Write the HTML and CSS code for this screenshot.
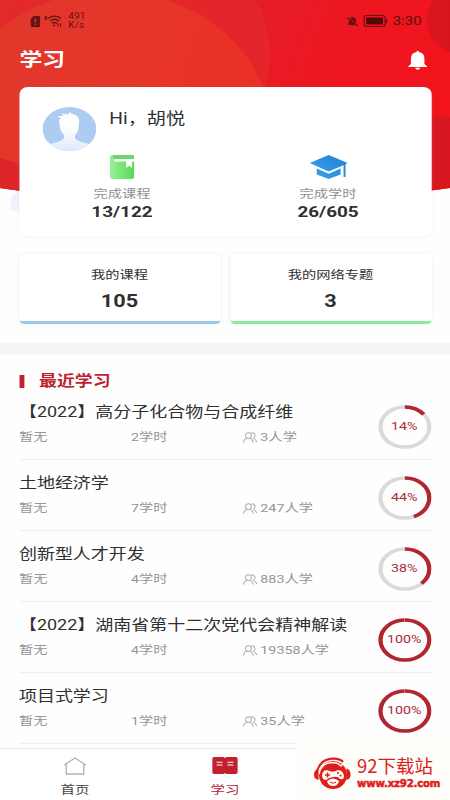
FILE: index.html
```html
<!DOCTYPE html>
<html lang="zh-CN">
<head>
<meta charset="utf-8">
<title>学习</title>
<link rel="stylesheet" href="styles.css">
</head>
<body>
<div class="screen">
  <svg class="backdrop" viewBox="0 0 450 240" preserveAspectRatio="none" aria-hidden="true">
    <defs>
      <linearGradient id="red" x1="0" x2="1" y1="0" y2="0.2"><stop offset="0" stop-color="#e32b2a"/><stop offset=".55" stop-color="#e51d26"/><stop offset=".8" stop-color="#ee1620"/><stop offset="1" stop-color="#f1141c"/></linearGradient>
      <linearGradient id="orange" x1="0" x2="1" y1="0" y2=".3"><stop offset="0" stop-color="#df3a2d"/><stop offset="1" stop-color="#eb3026"/></linearGradient>
      <clipPath id="dome"><path d="M0 0H450V188Q225 222 0 188Z"/></clipPath>
    </defs>
    <path d="M12 196L19 191V212L10 209Z" fill="#f1f1fb"/>
    <g clip-path="url(#dome)">
      <rect width="450" height="240" fill="url(#red)"/>
      <ellipse cx="163" cy="55" rx="107" ry="110" fill="#e42529"/>
      <ellipse cx="110" cy="134" rx="162" ry="143" fill="url(#orange)"/>
      <path d="M0 158Q60 172 120 230H0Z" fill="#dd2529"/>
      <path d="M425 120Q438 116 450 117V240H425Z" fill="#d91720"/>
      <ellipse cx="461" cy="20" rx="34" ry="34" fill="#d9151d"/>
    </g>
  </svg>

  <div class="status">
    <svg class="sim" viewBox="0 0 9 11" preserveAspectRatio="none"><path d="M3 0H8Q9 0 9 1V10Q9 11 8 11H1Q0 11 0 10V3Z" fill="#641414"/><path d="M4.500 2.500V6.500M4.500 7.700V9" stroke="#e23a2c" stroke-width="1.300"/></svg>
    <svg class="wifi" viewBox="0 0 18 12" preserveAspectRatio="none"><g fill="none" stroke="#641414" stroke-width="1.400"><path d="M4 3.500Q10.500-1.200 17 3.500M6 6Q10.500 2.600 15 6M8 8.300Q10.500 6.600 13 8.300"/><path d="M2.800 1Q.9 2 1 3.700A1 1 0 1 0 1.300 2.700" stroke-width="1"/><path d="M14 8.500V11.500M16.500 8.500V11.500" stroke-width="1.100"/></g><circle cx="10" cy="10.500" r="1.100" fill="#641414"/></svg>
    <div class="speed">491<br>K/s</div>
    <svg class="mute" viewBox="0 0 11 12" preserveAspectRatio="none"><path d="M1.200 9.500V8.700L2.300 7.500V4.800Q2.300 2 5 1.400Q5.500.4 6 1.400Q8.700 2 8.700 4.800V7.500L9.800 8.700V9.500ZM4.200 10.200H6.800Q6 11.700 4.200 10.200Z" fill="#64100f"/><path d="M.8 1.200L10.500 9.800" stroke="#e91e24" stroke-width="1"/><path d="M.5 2L10.300 10.700" stroke="#64100f" stroke-width="1.100"/></svg>
    <svg class="battery" viewBox="0 0 20 12" preserveAspectRatio="none"><rect x=".5" y=".5" width="17.300" height="11" rx="2.400" fill="none" stroke="#64100f"/><rect x="2.300" y="2.500" width="13.700" height="7" rx=".8" fill="#4e0b0c"/><path d="M19.200 4V8" stroke="#64100f" stroke-width="1.200"/></svg>
    <span class="clock">3:30</span>
  </div>

  <header class="top">
    <h1>学习</h1>
    <svg class="bell" viewBox="0 0 20 20" preserveAspectRatio="none"><path d="M9 2.100Q9 .5 10 .5T11 2.100Q16.500 3 16.500 8.500V14L19 16.200V17H1V16.200L3.500 14V8.500Q3.500 3 9 2.100ZM7.500 17.700H12.500Q12 19.700 10 19.700T7.500 17.700Z" fill="#fff"/></svg>
  </header>

  <section class="profile">
    <div class="person">
      <svg class="avatar" viewBox="0 0 44 44">
        <defs><linearGradient id="body" x1="0" x2="0" y1="0" y2="1"><stop offset=".35" stop-color="#fff"/><stop offset="1" stop-color="#dce9fb"/></linearGradient><clipPath id="face"><circle cx="22" cy="22" r="22"/></clipPath></defs>
        <g clip-path="url(#face)"><rect width="44" height="44" fill="#aecbf1"/><path d="M14 19L13.500 13L15 11.500L12 9L17 9L15.500 6.500L21 7.500L22 5L24 7Q30 8 30 14L29.500 20Q29 26 26.500 28V31Q27 34 38 37V45H6V37Q17 34 17.500 31V28Q14.500 25 14 19Z" fill="url(#body)"/></g>
      </svg>
      <span class="name">Hi，胡悦</span>
    </div>
    <div class="stats">
      <div class="stat">
        <svg class="book" viewBox="0 0 24 24" preserveAspectRatio="none"><defs><linearGradient id="green"><stop stop-color="#9cf09a"/><stop offset="1" stop-color="#56d951"/></linearGradient></defs><path d="M3 0H24V22Q24 24 22 24H3Q0 24 0 21V3Q0 0 3 0Z" fill="url(#green)"/><path d="M3 0H24V4H5Q3 4 3 2.500" fill="#6ed66c"/><path d="M4.500 4H24V6.500H22V13L19 10.800L16 13V6.500H4.500Z" fill="#fff"/></svg>
        <span>完成课程</span><b>13/122</b>
      </div>
      <div class="stat">
        <svg class="cap" viewBox="0 0 38 24" preserveAspectRatio="none"><defs><linearGradient id="blue" x1="0" x2="1" y1="1" y2="0"><stop stop-color="#3ba3ee"/><stop offset="1" stop-color="#1f80d5"/></linearGradient></defs><path d="M19 0L38 8L36 9.200V22H34V10.200L19 16.500L0 8ZM7 13.500L19 18.800L31 13.500V19.500L19 24L7 19.500Z" fill="url(#blue)"/></svg>
        <span>完成学时</span><b>26/605</b>
      </div>
    </div>
  </section>

  <section class="tiles">
    <div class="tile tile-blue"><span>我的课程</span><b>105</b></div>
    <div class="tile tile-green"><span>我的网络专题</span><b>3</b></div>
  </section>
  <div class="band"></div>

  <main class="recent">
    <h2>最近学习</h2>
    <div id="courses"></div>
  </main>

  <nav class="tabs">
    <div class="tab"><svg viewBox="0 0 22 18" preserveAspectRatio="none"><path d="M.7 8L11 1L21.300 8M2.700 7V17H19.300V7" fill="none" stroke="#b3b3b3" stroke-width="1.300"/></svg><span>首页</span></div>
    <div class="tab active"><svg viewBox="0 0 26 18" preserveAspectRatio="none"><path d="M2 0H11.500L13 1L14.500 0H24Q26 0 26 2V16Q26 18 24 18H14.500L13 17L11.500 18H2Q0 18 0 16V2Q0 0 2 0Z" fill="#c3202f"/><path d="M4.500 5.500H10.500M4.500 8.500H10.500M15.500 5.500H21.500M15.500 8.500H21.500" stroke="#fff" stroke-width="1.100"/></svg><span>学习</span></div>
    <div class="tab"></div>
  </nav>
</div>

<aside class="mark">
  <svg viewBox="0 0 38 34"><circle cx="20" cy="18" r="14" fill="#e01e19"/><path d="M4.500 13Q8 2 20 1.700Q27 1.500 30 5" fill="none" stroke="#e01e19" stroke-width="2.200"/><path d="M6 17Q8 6 19 5.500Q25 5.500 28 9L33 4" fill="none" stroke="#fffdf9" stroke-width="1.500"/><path d="M5.500 11.500V23Q1 22 1 17.500T5.500 11.500ZM33.500 11.500V23Q38 22 37.500 17T33.500 11.500Z" fill="#e01e19"/><path d="M9 18Q10 12 15 13.500Q20 16 25 13Q30 13 31 19Q31 23 27 22Q25 19 20 20Q15 21 13 23Q9 23 9 18Z" fill="#fffdf9"/><path d="M12 18H17M14.500 15.500V20.500" stroke="#e01e19" stroke-width="1.400"/><circle cx="25" cy="16" r="1.100" fill="#e01e19"/><circle cx="27.500" cy="18.500" r="1.100" fill="#e01e19"/><path d="M14 24Q20 19 26 24Q25 29 20 29T14 24Z" fill="#fffdf9"/><path d="M17 25Q20 27.500 23 25" fill="none" stroke="#e01e19"/></svg>
  <div class="mark-text"><span>92下载站</span><b>www.xz92.com</b></div>
</aside>
<script src="app.js"></script>
</body>
</html>
```
FILE: styles.css
```css
* { box-sizing: border-box; }
body { margin: 0; width: 450px; height: 800px; overflow: hidden; position: relative; background: #fff; }
h1, h2 { margin: 0; }
svg { display: block; flex: none; }

/* The handset layout is 369px wide and widened to fill the window. */
.screen {
  width: 369px; height: 800px; position: relative; overflow: hidden;
  display: flex; flex-direction: column;
  transform: scaleX(1.2195); transform-origin: 0 0;
  font-family: Roboto, "Noto Sans CJK SC", sans-serif; color: #303030; background: #fefefe;
}
.backdrop { position: absolute; left: 0; top: 0; width: 369px; height: 240px; }
.status, .top, .profile, .tiles { position: relative; }
.status { height: 42px; padding: 0 24px 0 25px; display: flex; align-items: center; color: #64100f; }
.sim { width: 8px; height: 11px; }
.wifi { width: 15px; height: 12px; margin-left: 3px; }
.speed { margin-left: 5px; font-size: 8.200px; line-height: 9px; letter-spacing: .1px; }
.mute { width: 10px; height: 11px; margin-left: auto; }
.battery { width: 20px; height: 12px; margin-left: 4px; }
.clock { font-size: 12.300px; margin-left: 4px; width: 23px; white-space: nowrap; }
.top { height: 45px; padding: 0 18.500px 9px 16px; display: flex; justify-content: space-between; align-items: center; color: #fff; }
.top h1 { font-size: 18.700px; line-height: 28px; font-weight: 700; }
.bell { width: 17px; height: 20px; margin-top: -1px; }

.profile { height: 149px; margin: 0 15.500px; padding: 20px 0 0; background: #fff; border-radius: 7px; box-shadow: 0 1px 4px rgba(160,190,220,.14); }
.person { height: 46px; padding-left: 19.700px; display: flex; }
.avatar { width: 44px; height: 44px; }
.name { margin-left: 10.500px; font-size: 15.700px; line-height: 24px; }
.stats { display: flex; }
.stat { width: 50%; display: flex; flex-direction: column; align-items: center; padding-top: 2px; }
.stat span { font-size: 11.700px; line-height: 16px; margin-top: 7px; color: #919191; }
.stat b { font-size: 15.500px; line-height: 20px; }
.book { width: 20px; height: 24px; }
.cap { width: 31px; height: 24px; }

.tiles { margin: 18px 15.500px 0; display: flex; gap: 8px; }
.tile { flex: 1; height: 70px; padding-top: 11px; display: flex; flex-direction: column; align-items: center; background: #fff; border-radius: 4px; border-bottom: 3px solid; box-shadow: 0 0 5px rgba(150,200,210,.22); }
.tile-blue { border-bottom-color: #9dc9e6; }
.tile-green { border-bottom-color: #8cea9a; }
.tile span { font-size: 11.700px; line-height: 20px; }
.tile b { font-size: 17.800px; line-height: 22px; margin-top: 5px; }
.band { flex: none; height: 12px; margin-top: 19px; background: #f5f5f5; }

.recent { padding: 16px 15.500px 0; flex: none; height: 393px; }
.recent h2 { display: flex; align-items: center; height: 18px; color: #bd2430; font-size: 14.700px; line-height: 21px; font-weight: 700; padding-top: 3px; }
.recent h2::before { content: ""; width: 4.500px; height: 13px; margin-right: 12px; background: #c3202f; }
.course { height: 71px; display: flex; justify-content: space-between; border-bottom: 1px solid #efefef; }
.title { height: 24px; padding-top: 11px; margin-bottom: 16px; font-size: 14.750px; line-height: 24px; white-space: nowrap; }
.meta { display: grid; grid-template-columns: 92px 91px auto; font-size: 11.700px; line-height: 16px; color: #959595; }
.meta span { display: flex; align-items: center; white-space: nowrap; }
.people { width: 12px; height: 11px; margin-right: 3px; }
.ring { position: relative; width: 44px; height: 44px; margin-top: 15.500px; }
.ring svg { width: 44px; height: 44px; }
.ring span { position: absolute; inset: 0; text-align: center; font-size: 11.700px; line-height: 43px; color: #a92b38; }

.tabs { position: absolute; left: 0; bottom: 0; width: 369px; height: 52px; border-top: 1px solid #ececec; background: #fff; display: flex; }
.tab { width: 33.333%; padding-top: 8px; display: flex; flex-direction: column; align-items: center; font-size: 11.900px; line-height: 18px; color: #444; }
.tab svg { width: 19px; height: 18px; }
.tab.active svg { width: 21px; height: 17px; margin-bottom: 1px; }
.tab span { margin-top: 6px; }
.tab.active { color: #b52638; }

.mark { position: absolute; left: 297px; top: 741px; width: 153px; height: 59px; background: #fffefb; display: flex; padding: 16px 0 0 16px; color: #dc211c; }
.mark > svg { width: 38px; height: 34px; }
.mark-text { margin: -4px 0 0 6px; display: flex; flex-direction: column; white-space: nowrap; }
.mark-text span { font-family: "Noto Sans CJK SC", sans-serif; font-size: 18.500px; line-height: 25px; }
.mark-text b { font-family: "DejaVu Sans", sans-serif; font-size: 10.200px; line-height: 11px; letter-spacing: -.2px; -webkit-text-stroke: .5px #dc211c; }
```
FILE: app.js
```js
const courses = [
  ["【2022】高分子化合物与合成纤维", 2, 3, 14],
  ["土地经济学", 7, 247, 44],
  ["创新型人才开发", 4, 883, 38],
  ["【2022】湖南省第十二次党代会精神解读", 4, 19358, 100],
  ["项目式学习", 1, 35, 100]
];
const people = '<svg class="people" viewBox="0 0 14 11" preserveAspectRatio="none"><g fill="none" stroke="#999" stroke-width=".9"><circle cx="5.5" cy="3.600" r="2.900"/><path d="M.6 10.600Q1 7 4 6.300M7 6.300Q9.700 7 10.200 10.600M8 1.200Q10 .2 11.300 1.700Q12.800 4.500 10.300 6.300Q13 7.500 13.400 10"/></g></svg>';

document.getElementById("courses").innerHTML = courses.map(([title, hours, count, pct]) => `
  <div class="course">
    <div>
      <div class="title">${title}</div>
      <div class="meta"><span>暂无</span><span>${hours}学时</span><span>${people}${count}人学</span></div>
    </div>
    <div class="ring">
      <svg viewBox="0 0 44 44"><g fill="none" stroke-width="3.500">
        <circle cx="22" cy="22" r="20" stroke="#dadada"/>
        <circle cx="22" cy="22" r="20" stroke="#b4262f" pathLength="100" stroke-dasharray="${pct === 100 ? 99.700 : pct} 100" transform="rotate(-90 22 22)"/>
      </g></svg>
      <span>${pct}%</span>
    </div>
  </div>`).join("");
```
